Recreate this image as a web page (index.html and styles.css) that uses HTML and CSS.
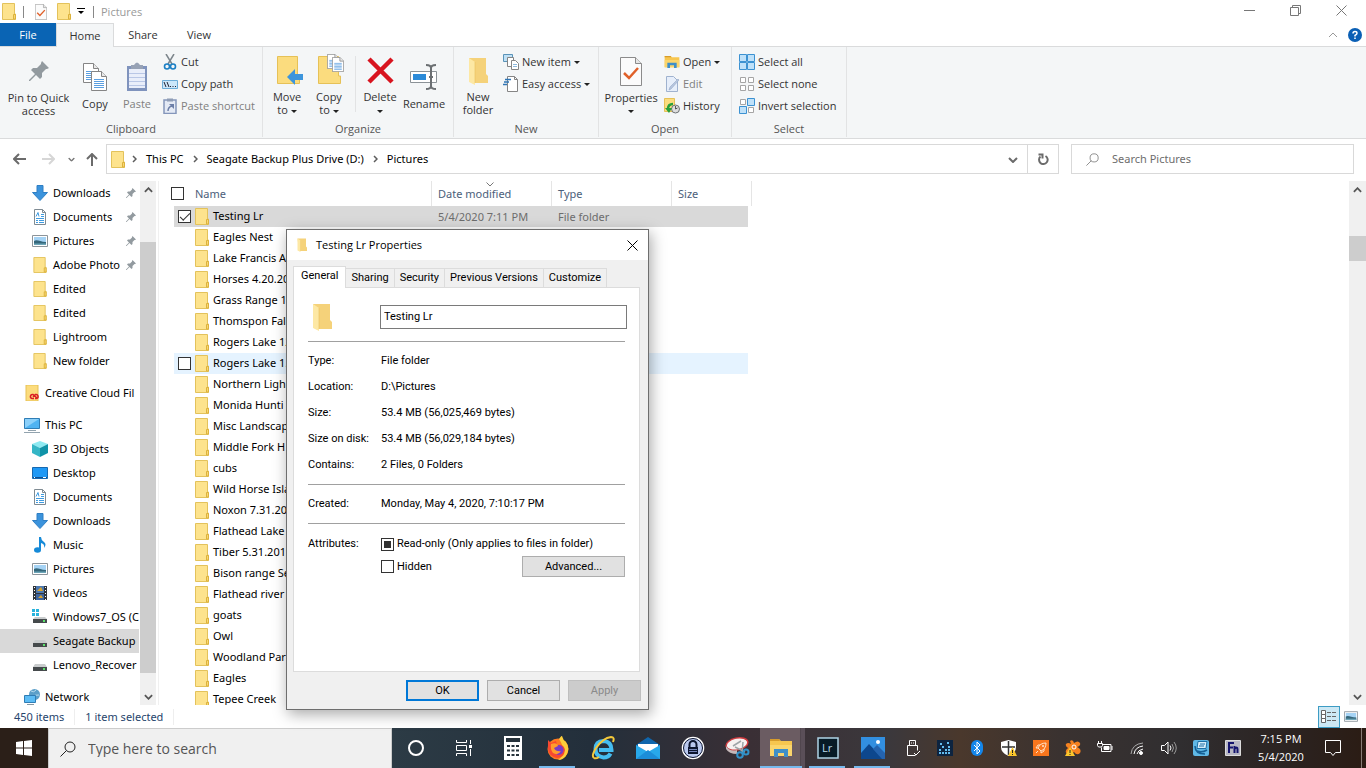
FILE: index.html
```html
<!DOCTYPE html>
<html lang="en">

<head>
    <meta charset="utf-8">
    <title>Pictures</title>
    <link rel="stylesheet" href="styles.css">
</head>

<body>
    <!-- icons used more than once -->
    <svg class="sprite" aria-hidden="true">
        <symbol id="folder" viewBox="0 0 14 17">
            <path d="M.5.5h12v10.500h1v5.500H.5z" fill="#fde38d" stroke="#e3c25b" />
            <path d="M11.500 16v-4.500h2V16z" fill="#f8d775" stroke="#dcb23c" />
        </symbol>
        <symbol id="folder-open" viewBox="0 0 20 28">
            <path d="M1 1h17v16l2 2v7H4z" fill="#f5d27a" />
            <path d="M1 1l6 4v23l-6-3z" fill="#fde8a4" />
            <path d="M7 5v21" stroke="#e9bf5b" stroke-width=".6" />
        </symbol>
        <symbol id="pin" viewBox="0 0 20 20">
            <path d="M13 0l7 7-2 1-1 0-4 4 0 4-2 2-4-4-6 6-1 0 0-1 6-6-4-4 2-2 4 0 4-4 0-1z" fill="#929a9f" />
        </symbol>
        <symbol id="down" viewBox="0 0 16 16">
            <path d="M5 .5h6v7h4.500L8 15.500.5 7.500H5z" fill="#3b93dc" stroke="#2f7fc4" />
        </symbol>
        <symbol id="doc" viewBox="0 0 16 16">
            <path d="M2.500.5h8l3 3v12h-11z" fill="#fff" stroke="#7f8b93" />
            <path d="M10.500.5v3h3" fill="none" stroke="#7f8b93" />
            <path d="M4 7.500l2-4 1 4M9 5.500h3M9 7.500h3M4 9.500h8M4 11.500h2M4 13.500h2M7 11.500h5M7 13.500h5" fill="none" stroke="#3f9be0" />
        </symbol>
        <symbol id="pic" viewBox="0 0 16 12">
            <path d="M.5.5h15v11H.5z" fill="#fff" stroke="#8c949a" />
            <path d="M2 2h12v8H2z" fill="#a5d3f5" />
            <path d="M2 6c3-2 6 1 12 1v3H2z" fill="#35677b" />
            <path d="M2 8.500h12V10H2z" fill="#6da6b8" />
        </symbol>
        <symbol id="drive" viewBox="0 0 16 16">
            <path d="M3 7h10l2 3H1z" fill="#c9cccd" />
            <path d="M1 10h14v4H1z" fill="#454a4c" />
            <path d="M11 12h2" stroke="#5be36b" stroke-width="2" />
        </symbol>
        <symbol id="page" viewBox="0 0 16 20">
            <path d="M.5.5h10l5 5v14H.5z" fill="#fff" stroke="#858585" />
            <path d="M10.500.5v5h5" fill="#e8e8e8" stroke="#858585" />
            <path d="M3 8.500h10M3 10.500h10M3 12.500h10M3 14.500h10M3 16.500h10" stroke="#5b9fe0" />
        </symbol>
        <symbol id="check-page" viewBox="0 0 22 29">
            <path d="M.5.5h15l6 6v22H.5z" fill="#fbfbfb" stroke="#8b8b8b" />
            <path d="M15.500.5v6h6" fill="#e6e6e6" stroke="#8b8b8b" />
            <path d="M4 16l5 5 9-10" fill="none" stroke="#e0612a" stroke-width="2.500" />
        </symbol>
        <symbol id="chev-up" viewBox="0 0 10 6">
            <path d="M1 5l4-4 4 4" fill="none" stroke="currentColor" stroke-width="2" />
        </symbol>
        <symbol id="chev-down" viewBox="0 0 10 6">
            <path d="M1 1l4 4 4-4" fill="none" stroke="currentColor" stroke-width="2" />
        </symbol>
        <symbol id="chev-right" viewBox="0 0 5 8">
            <path d="M1 1l3 3-3 3" fill="none" stroke="#5c5c5c" stroke-width="1.500" />
        </symbol>
        <symbol id="caret" viewBox="0 0 6 3">
            <path d="M0 0h6L3 3z" fill="#222" />
        </symbol>
        <symbol id="search" viewBox="0 0 16 16">
            <circle cx="10" cy="6" r="5" fill="none" stroke="currentColor" />
            <path d="M6.500 9.500L.5 15.500" stroke="currentColor" />
        </symbol>
        <symbol id="explorer" viewBox="0 0 24 20">
            <path d="M1 1h9l2 2h11v15H1z" fill="#f7c64f" />
            <path d="M1 1h9l1 2H1z" fill="#d79c2b" />
            <path d="M1 7h22v11H1z" fill="#fbd56c" />
            <path d="M5 19v-8h14v8h-4v-4H9v4z" fill="#3f8fc8" />
        </symbol>
    </svg>

    <div class="window">
        <header class="titlebar">
            <svg class="i-folder"><use href="#folder" /></svg>
            <span class="bar"></span>
            <button class="quick" aria-label="Properties"><svg width="12" height="16"><use href="#check-page" /></svg></button>
            <button class="quick" aria-label="New folder"><svg class="i-folder"><use href="#folder" /></svg></button>
            <button class="quick more" aria-label="Customize toolbar"><svg width="8" height="7" viewBox="0 0 8 7"><path d="M0 .5h8" stroke="#000" /><path d="M1 3h6L4 6z" /></svg></button>
            <span class="bar"></span>
            <span class="caption">Pictures</span>
            <div class="winbuttons">
                <button aria-label="Minimize"><svg width="11" height="11"><path d="M0 5.500h11" stroke="#777" /></svg></button>
                <button aria-label="Restore"><svg width="11" height="11" fill="none" stroke="#777"><path d="M.5 2.500h8v8h-8zM2.500 2.500v-2h8v8h-2" /></svg></button>
                <button aria-label="Close"><svg width="11" height="11"><path d="M.5.5l10 10M10.500.5l-10 10" stroke="#777" /></svg></button>
            </div>
        </header>

        <nav class="tabs">
            <button class="file">File</button>
            <button class="active">Home</button>
            <button>Share</button>
            <button>View</button>
            <span class="tabs-right">
                <svg class="collapse" width="10" height="6"><path d="M1 5l4-4 4 4" fill="none" stroke="#999" /></svg>
                <svg width="14" height="14"><circle cx="7" cy="7" r="7" fill="#0a5fb5" /><path d="M5 5.500q0-2 2-2t2 1.700q0 1-2 2.200v1M7 9.500v1.500" fill="none" stroke="#fff" stroke-width="1.500" /></svg>
            </span>
        </nav>

        <section class="ribbon">
            <div class="group">
                <div class="tools">
                    <button class="big pin-btn"><svg class="pic" viewBox="0 0 32 32"><use href="#pin" x="6" y="6" width="20" height="20" /></svg>Pin to Quick<br>access</button>
                    <button class="big"><svg class="pic" viewBox="0 0 32 32"><use href="#page" x="4" y="2" width="16" height="20" /><use href="#page" x="12" y="10" width="16" height="20" /></svg>Copy</button>
                    <button class="big dim"><svg class="pic" viewBox="0 0 32 32"><path d="M6 5h20v25H6z" fill="#7f93bd" /><path d="M8 8h16v19H8z" fill="#e9eefa" /><path d="M10 4h3q3-5 6 0h3v4H10z" fill="#97a2b5" /><path d="M8 12.500h16M8 16.500h16M8 20.500h16M8 24.500h16" stroke="#b9c7e6" /></svg>Paste</button>
                    <div class="stack">
                        <button><svg class="ico" viewBox="0 0 16 16"><path d="M4 0l6 10M12 0L6 10" stroke="#7d868c" stroke-width="1.500" /><circle cx="5" cy="12.500" r="2.500" fill="none" stroke="#1b7fc4" stroke-width="1.600" /><circle cx="11" cy="12.500" r="2.500" fill="none" stroke="#1b7fc4" stroke-width="1.600" /></svg>Cut</button>
                        <button><svg class="ico" viewBox="0 0 16 16"><path d="M.5 4.500h15v8H.5z" fill="#cbe7fa" stroke="#6dadd8" /><path d="M2 6l2 5M5 6l2 5M8 10.500h1M10.500 10.500h1M13 10.500h1" stroke="#223" /></svg>Copy path</button>
                        <button class="dim"><svg class="ico" viewBox="0 0 16 16"><path d="M2 2h12v13.500H2z" fill="#e4eaf5" stroke="#8496bb" stroke-width="1.500" /><path d="M5 .5h6v3H5z" fill="#8f9db5" /><path d="M6 13q0-4 4-5" fill="none" stroke="#6c7fa8" stroke-width="1.500" /><path d="M7 6h5v5z" fill="#6c7fa8" /></svg>Paste shortcut</button>
                    </div>
                </div>
                <h2>Clipboard</h2>
            </div>
            <div class="group organize">
                <div class="tools">
                    <button class="big"><svg class="pic" viewBox="0 0 32 32"><path d="M6.500 2.500h20V22h2v7.500h-22z" fill="#fbdc7e" stroke="#e6c157" /><path d="M32 20v6h-8v5l-8-8 8-8v5z" fill="#3d95dc" /></svg>Move<br>to <svg class="caret"><use href="#caret" /></svg></button>
                    <button class="big"><svg class="pic" viewBox="0 0 32 32"><path d="M5.500 2.500h20V22h2v7.500h-22z" fill="#fbdc7e" stroke="#e6c157" /><use href="#page" x="14" y="0" width="12" height="15" /><use href="#page" x="19" y="3" width="12" height="15" /></svg>Copy<br>to <svg class="caret"><use href="#caret" /></svg></button>
                    <span class="split"></span>
                    <button class="big"><svg class="pic" viewBox="0 0 32 32"><path d="M5 5l23 23M28 5L5 28" stroke="#d8141f" stroke-width="4.500" /></svg>Delete<br><svg class="caret"><use href="#caret" /></svg></button>
                    <button class="big wide"><svg class="pic" viewBox="0 0 32 32"><path d="M2.500 10.500h26v11h-26z" fill="#fff" stroke="#8b9297" /><path d="M5 13h13v6H5z" fill="#2b8ad8" /><path d="M18 4q5 0 5 3v18q0 3-5 3M28 4q-5 0-5 3v18q0 3 5 3M21 16h4" fill="none" stroke="#6b6f72" stroke-width="2" /></svg>Rename</button>
                </div>
                <h2>Organize</h2>
            </div>
            <div class="group new">
                <div class="tools">
                    <button class="big"><svg class="pic" viewBox="0 0 32 32"><use href="#folder-open" x="6" y="3" width="20" height="28" /></svg>New<br>folder</button>
                    <div class="stack">
                        <button><svg class="ico" viewBox="0 0 16 16"><path d="M.5.5h9v7h-9z" fill="#bfe0f5" stroke="#5a93b8" /><path d="M4.500 3.500h6v9h-6z" fill="#fff" stroke="#858585" /><path d="M8.500 6.500h4l3 3v6h-7z" fill="#fff" stroke="#858585" /><path d="M10 10.500h4M10 12.500h4" stroke="#8db9dd" /></svg>New item <svg class="caret"><use href="#caret" /></svg></button>
                        <button><svg class="ico" viewBox="0 0 16 16"><path d="M4.500.5h7l3 3v12h-10z" fill="#fff" stroke="#858585" /><path d="M11.500.5v3h3" fill="none" stroke="#858585" /><path d="M2 3.500h6M1 6h5M0 8.500h4" stroke="#2f75b5" stroke-width="1.500" /></svg>Easy access <svg class="caret"><use href="#caret" /></svg></button>
                    </div>
                </div>
                <h2>New</h2>
            </div>
            <div class="group open">
                <div class="tools">
                    <button class="big props"><svg class="pic" viewBox="0 0 32 32"><use href="#check-page" x="5" y="2" width="22" height="29" /></svg>Properties<br><svg class="caret"><use href="#caret" /></svg></button>
                    <div class="stack">
                        <button><svg class="ico" viewBox="0 0 24 20"><use href="#explorer" width="24" height="20" /></svg>Open <svg class="caret"><use href="#caret" /></svg></button>
                        <button class="dim"><svg class="ico" viewBox="0 0 16 16"><path d="M2.500.5h7l4 4v11h-11z" fill="#e6eefa" stroke="#9fb2cf" /><path d="M15 4l-8 9-2 1 1-3 8-8z" fill="#b7c6de" stroke="#93a7c8" stroke-width=".6" /></svg>Edit</button>
                        <button><svg class="ico" viewBox="0 0 16 16"><path d="M.5.5h10v13H.5z" fill="#fbdc7e" stroke="#e6c157" /><circle cx="11.500" cy="11" r="4" fill="#ddd" stroke="#6d7275" /><path d="M11.500 8v3l2-1" fill="none" stroke="#555" /><path d="M9 6q-5 0-5 5" fill="none" stroke="#29a03a" stroke-width="2.500" /><path d="M1 10h7l-3 5z" fill="#29a03a" /></svg>History</button>
                    </div>
                </div>
                <h2>Open</h2>
            </div>
            <div class="group select">
                <div class="tools">
                    <div class="stack">
                        <button><svg class="ico" viewBox="0 0 16 16" fill="#bfe1f9" stroke="#3c92d2"><path d="M.5.5h7v7h-7zM8.500.5h7v7h-7zM.5 8.500h7v7h-7zM8.500 8.500h7v7h-7z" /></svg>Select all</button>
                        <button><svg class="ico" viewBox="0 0 16 16" fill="#fff" stroke="#a5a5a5"><path d="M1.500 1.500h5v5h-5zM9.500 1.500h5v5h-5zM1.500 9.500h5v5h-5zM9.500 9.500h5v5h-5z" /></svg>Select none</button>
                        <button><svg class="ico" viewBox="0 0 16 16"><path d="M1.500 1.500h5v5h-5zM9.500 9.500h5v5h-5z" fill="#fff" stroke="#a5a5a5" /><path d="M8.500.5h7v7h-7zM.5 8.500h7v7h-7z" fill="#bfe1f9" stroke="#3c92d2" /></svg>Invert selection</button>
                    </div>
                </div>
                <h2>Select</h2>
            </div>
        </section>

        <div class="navbar">
            <div class="arrows">
                <button aria-label="Back"><svg width="13" height="12" fill="none" stroke="#6b6b6b" stroke-width="2"><path d="M1 6h12M6 1L1 6l5 5" /></svg></button>
                <button aria-label="Forward"><svg width="13" height="12" fill="none" stroke="#d6d6d6" stroke-width="2"><path d="M0 6h12M7 1l5 5-5 5" /></svg></button>
                <button class="recent" aria-label="Recent locations"><svg width="7" height="5" viewBox="0 0 10 6"><use href="#chev-down" /></svg></button>
                <button class="up" aria-label="Up"><svg width="12" height="13" fill="none" stroke="#6b6b6b" stroke-width="2"><path d="M6 1v12M1 6l5-5 5 5" /></svg></button>
            </div>
            <div class="address">
                <svg class="i-folder"><use href="#folder" /></svg>
                <svg class="sep"><use href="#chev-right" /></svg><a href="#">This PC</a>
                <svg class="sep"><use href="#chev-right" /></svg><a href="#">Seagate Backup Plus Drive (D:)</a>
                <svg class="sep"><use href="#chev-right" /></svg><a href="#">Pictures</a>
                <button class="history" aria-label="Previous locations"><svg width="10" height="6"><use href="#chev-down" /></svg></button>
                <button class="refresh" aria-label="Refresh"><svg width="12" height="12" fill="none" stroke="#6b6b6b" stroke-width="2"><path d="M8.500 3A4.300 4.300 0 1 1 3.500 3.500M1.500 1.500h4v4" /></svg></button>
            </div>
            <label class="search"><svg width="13" height="13" viewBox="0 0 16 16"><use href="#search" /></svg><input type="text" placeholder="Search Pictures" aria-label="Search Pictures"></label>
        </div>

        <main class="content">
            <aside class="sidebar">
                <ul class="tree">
                    <li><svg class="ico"><use href="#down" /></svg><span>Downloads</span><svg class="pinned"><use href="#pin" /></svg></li>
                    <li><svg class="ico"><use href="#doc" /></svg><span>Documents</span><svg class="pinned"><use href="#pin" /></svg></li>
                    <li><svg class="ico"><use href="#pic" /></svg><span>Pictures</span><svg class="pinned"><use href="#pin" /></svg></li>
                    <li><svg class="ico"><use href="#folder" /></svg><span>Adobe Photo</span><svg class="pinned"><use href="#pin" /></svg></li>
                    <li><svg class="ico"><use href="#folder" /></svg><span>Edited</span></li>
                    <li><svg class="ico"><use href="#folder" /></svg><span>Edited</span></li>
                    <li><svg class="ico"><use href="#folder" /></svg><span>Lightroom</span></li>
                    <li><svg class="ico"><use href="#folder" /></svg><span>New folder</span></li>
                    <li class="root"><svg class="ico" viewBox="0 0 16 16"><path d="M2 0h12v16H2z" fill="#fcdc7d" stroke="#e6c157" /><path d="M10 13.500H8a2 2 0 1 1 1-4l4 3.500M11 13.500h1.500a2 2 0 1 0-1-4L9 12" fill="none" stroke="#da1f26" stroke-width="1.500" /></svg><span>Creative Cloud Fil</span></li>
                    <li class="root"><svg class="ico" viewBox="0 0 16 16"><path d="M.5 1.500h15v10H.5z" fill="#4fb3f2" stroke="#2f7db5" /><path d="M1 2h14L1 11z" fill="#8bd0fa" /><path d="M4 13.500h8M0 15.500h16" stroke="#92a3ae" /></svg><span>This PC</span></li>
                    <li><svg class="ico" viewBox="0 0 16 16"><path d="M0 3l8-3 8 3-8 4z" fill="#8eeaf2" /><path d="M0 3l8 4v9l-8-4z" fill="#35b6c6" /><path d="M16 3L8 7v9l8-4z" fill="#0f93a8" /></svg><span>3D Objects</span></li>
                    <li><svg class="ico" viewBox="0 0 16 16"><path d="M.5 2.500h15v11H.5z" fill="#1e98f5" stroke="#1668b0" /><path d="M1 12.500h14" stroke="#0d4f92" /><path d="M2 12.500h1M11 12.500h3" stroke="#fff" /></svg><span>Desktop</span></li>
                    <li><svg class="ico"><use href="#doc" /></svg><span>Documents</span></li>
                    <li><svg class="ico"><use href="#down" /></svg><span>Downloads</span></li>
                    <li><svg class="ico" viewBox="0 0 16 16"><ellipse cx="5.500" cy="13" rx="3.500" ry="2.700" fill="#168ad8" /><path d="M7 0h2q0 3 3 5t0 6q1-4-3-5v7H7z" fill="#168ad8" /></svg><span>Music</span></li>
                    <li><svg class="ico"><use href="#pic" /></svg><span>Pictures</span></li>
                    <li><svg class="ico" viewBox="0 0 16 16"><path d="M1 1h14v14H1z" fill="#2f3338" /><path d="M4 1h8v7H4z" fill="#4c78b0" /><path d="M4 9h8v6H4z" fill="#3c639c" /><path d="M5 6l4-4 2 4zM6 13l3-3 2 3z" fill="#d9a32c" /><path d="M2.500 2v13M13.500 2v13" stroke="#fff" stroke-dasharray="1 2" /></svg><span>Videos</span></li>
                    <li><svg class="ico" viewBox="0 0 16 16"><path d="M0 0h3v3H0zM4 0h3v3H4zM0 4h3v3H0zM4 4h3v3H4z" fill="#29b3dc" /><path d="M3 8h10l2 2H1z" fill="#c9cccd" /><path d="M1 10h14v4H1z" fill="#454a4c" /><path d="M11 12h2" stroke="#5be36b" stroke-width="2" /></svg><span>Windows7_OS (C</span></li>
                    <li class="current"><svg class="ico"><use href="#drive" /></svg><span>Seagate Backup</span></li>
                    <li><svg class="ico"><use href="#drive" /></svg><span>Lenovo_Recover</span></li>
                    <li class="root"><svg class="ico" viewBox="0 0 16 16"><circle cx="10.500" cy="5.500" r="5.500" fill="#5b9fc9" /><path d="M7 2q3 2 5-1M8 9q3-4 7-3" stroke="#b9dcef" fill="none" /><path d="M.5 6.500h11v7H.5z" fill="#5cbcf5" stroke="#2f7db5" /><path d="M3 15.500h7" stroke="#8597a3" /></svg><span>Network</span></li>
                </ul>
                <div class="scrollbar">
                    <svg class="chev"><use href="#chev-up" /></svg>
                    <span class="thumb"></span>
                    <svg class="chev"><use href="#chev-down" /></svg>
                </div>
            </aside>

            <div class="files">
                <table>
                    <colgroup>
                        <col class="c-check">
                        <col class="c-name">
                        <col class="c-data">
                        <col class="c-data">
                        <col class="c-size">
                    </colgroup>
                    <thead>
                        <tr>
                            <th><input type="checkbox" aria-label="Select all"></th>
                            <th>Name</th>
                            <th class="sorted">Date modified<svg width="8" height="5"><path d="M.5.5L4 4 7.500.5" fill="none" stroke="#777" /></svg></th>
                            <th>Type</th>
                            <th>Size</th>
                        </tr>
                    </thead>
                    <tbody>
                        <tr class="selected"><td><input type="checkbox" checked aria-label="Testing Lr"></td><td><svg class="i-folder"><use href="#folder" /></svg>Testing Lr</td><td>5/4/2020 7:11 PM</td><td>File folder</td><td></td></tr>
                        <tr><td></td><td><svg class="i-folder"><use href="#folder" /></svg>Eagles Nest</td><td></td><td></td><td></td></tr>
                        <tr><td></td><td><svg class="i-folder"><use href="#folder" /></svg>Lake Francis A</td><td></td><td></td><td></td></tr>
                        <tr><td></td><td><svg class="i-folder"><use href="#folder" /></svg>Horses 4.20.20</td><td></td><td></td><td></td></tr>
                        <tr><td></td><td><svg class="i-folder"><use href="#folder" /></svg>Grass Range 1</td><td></td><td></td><td></td></tr>
                        <tr><td></td><td><svg class="i-folder"><use href="#folder" /></svg>Thomspon Fal</td><td></td><td></td><td></td></tr>
                        <tr><td></td><td><svg class="i-folder"><use href="#folder" /></svg>Rogers Lake 12</td><td></td><td></td><td></td></tr>
                        <tr class="hover"><td><input type="checkbox" aria-label="Rogers Lake 1"></td><td><svg class="i-folder"><use href="#folder" /></svg>Rogers Lake 1.</td><td></td><td></td><td></td></tr>
                        <tr><td></td><td><svg class="i-folder"><use href="#folder" /></svg>Northern Ligh</td><td></td><td></td><td></td></tr>
                        <tr><td></td><td><svg class="i-folder"><use href="#folder" /></svg>Monida Hunti</td><td></td><td></td><td></td></tr>
                        <tr><td></td><td><svg class="i-folder"><use href="#folder" /></svg>Misc Landscap</td><td></td><td></td><td></td></tr>
                        <tr><td></td><td><svg class="i-folder"><use href="#folder" /></svg>Middle Fork H</td><td></td><td></td><td></td></tr>
                        <tr><td></td><td><svg class="i-folder"><use href="#folder" /></svg>cubs</td><td></td><td></td><td></td></tr>
                        <tr><td></td><td><svg class="i-folder"><use href="#folder" /></svg>Wild Horse Isla</td><td></td><td></td><td></td></tr>
                        <tr><td></td><td><svg class="i-folder"><use href="#folder" /></svg>Noxon 7.31.20</td><td></td><td></td><td></td></tr>
                        <tr><td></td><td><svg class="i-folder"><use href="#folder" /></svg>Flathead Lake</td><td></td><td></td><td></td></tr>
                        <tr><td></td><td><svg class="i-folder"><use href="#folder" /></svg>Tiber 5.31.2019</td><td></td><td></td><td></td></tr>
                        <tr><td></td><td><svg class="i-folder"><use href="#folder" /></svg>Bison range Se</td><td></td><td></td><td></td></tr>
                        <tr><td></td><td><svg class="i-folder"><use href="#folder" /></svg>Flathead river</td><td></td><td></td><td></td></tr>
                        <tr><td></td><td><svg class="i-folder"><use href="#folder" /></svg>goats</td><td></td><td></td><td></td></tr>
                        <tr><td></td><td><svg class="i-folder"><use href="#folder" /></svg>Owl</td><td></td><td></td><td></td></tr>
                        <tr><td></td><td><svg class="i-folder"><use href="#folder" /></svg>Woodland Par</td><td></td><td></td><td></td></tr>
                        <tr><td></td><td><svg class="i-folder"><use href="#folder" /></svg>Eagles</td><td></td><td></td><td></td></tr>
                        <tr><td></td><td><svg class="i-folder"><use href="#folder" /></svg>Tepee Creek</td><td></td><td></td><td></td></tr>
                    </tbody>
                </table>
            </div>
            <div class="scrollbar main-scroll">
                <svg class="chev"><use href="#chev-up" /></svg>
                <span class="thumb"></span>
                <svg class="chev"><use href="#chev-down" /></svg>
            </div>
        </main>

        <footer class="status">
            <span>450 items</span>
            <span>1 item selected</span>
            <div class="views">
                <button class="on" aria-label="Details"><svg width="16" height="14" stroke="#666" fill="#fff"><path d="M.5.5h4v4h-4zM.5 4.500h4v4h-4zM.5 8.500h4v4h-4z" /><path d="M6 2.500h4M11 2.500h4M6 6.500h4M11 6.500h4M6 10.500h4M11 10.500h4" /></svg></button>
                <button aria-label="Large icons"><svg width="14" height="11"><use href="#pic" /></svg></button>
            </div>
        </footer>
    </div>

    <div class="dialog" role="dialog" aria-label="Testing Lr Properties">
        <div class="dialog-title">
            <svg width="10" height="14"><use href="#folder-open" /></svg>
            <span>Testing Lr Properties</span>
            <button aria-label="Close"><svg width="11" height="11"><path d="M.5.5l10 10M10.500.5l-10 10" stroke="#000" /></svg></button>
        </div>
        <div class="dialog-tabs">
            <button class="active">General</button>
            <button>Sharing</button>
            <button>Security</button>
            <button>Previous Versions</button>
            <button>Customize</button>
        </div>
        <div class="panel">
            <div class="name-row">
                <svg width="20" height="28"><use href="#folder-open" /></svg>
                <input type="text" value="Testing Lr" aria-label="Name">
            </div>
            <hr>
            <dl>
                <dt>Type:</dt><dd>File folder</dd>
                <dt>Location:</dt><dd>D:\Pictures</dd>
                <dt>Size:</dt><dd>53.4 MB (56,025,469 bytes)</dd>
                <dt>Size on disk:</dt><dd>53.4 MB (56,029,184 bytes)</dd>
                <dt>Contains:</dt><dd>2 Files, 0 Folders</dd>
            </dl>
            <hr>
            <dl>
                <dt>Created:</dt><dd>Monday, May 4, 2020, 7:10:17 PM</dd>
            </dl>
            <hr>
            <div class="attributes">
                <span>Attributes:</span>
                <div class="boxes">
                    <label><input type="checkbox" class="mixed">Read-only (Only applies to files in folder)</label>
                    <div class="hidden-row">
                        <label><input type="checkbox">Hidden</label>
                        <button class="btn advanced">Advanced...</button>
                    </div>
                </div>
            </div>
        </div>
        <div class="dialog-buttons">
            <button class="btn default">OK</button>
            <button class="btn">Cancel</button>
            <button class="btn" disabled>Apply</button>
        </div>
    </div>

    <footer class="taskbar">
        <button class="start" aria-label="Start"><svg width="16" height="16" fill="#fff"><path d="M0 2l7-1v6.500H0zM8 1l8-1v7.500H8zM0 8.500h7V15l-7-1zM8 8.500h8V16l-8-1z" /></svg></button>
        <label class="task-search"><svg width="16" height="16"><use href="#search" /></svg><input type="text" placeholder="Type here to search" aria-label="Type here to search"></label>
        <div class="system">
            <button aria-label="Cortana"><svg width="18" height="18"><circle cx="9" cy="9" r="7" fill="none" stroke="#fff" stroke-width="2" /></svg></button>
            <button aria-label="Task view"><svg width="18" height="16" fill="none" stroke="#fff"><path d="M1.500 0v2.500h10V0M1.500 5.500h10v5h-10zM1.500 16v-2.500h10V16M15.500 0v4M15.500 9v7" /><path d="M14 5h3v3h-3z" fill="#fff" stroke="none" /></svg></button>
        </div>
        <div class="apps">
            <button aria-label="Calculator"><svg width="18" height="24"><path d="M0 0h18v24H0z" fill="#fff" /><path d="M2 2h14v4H2z" fill="#26323b" /><path d="M3 10h12M3 14.500h12M3 19h12" stroke="#26323b" stroke-width="2" stroke-dasharray="3 1.500" /></svg></button>
            <button class="running" aria-label="Firefox"><svg width="24" height="24"><circle cx="12" cy="13" r="10.500" fill="#ff7a21" /><path d="M13 3q3-4 3-3 1 4 4 6 4 6 1 12-3 6-9 6 10-7 1-21z" fill="#ffce3a" /><path d="M2 4l3 3 5-2 1 4q7-1 8 5-1 8-8 8-9-2-9-10z" fill="#f8482f" /><circle cx="12.500" cy="14" r="5" fill="#7a3cc4" /><path d="M5 8q6-2 7 2l-4 2q2 4 7 3-3 5-8 2-3-4-2-9z" fill="#ff9d2c" /></svg></button>
            <button aria-label="Internet Explorer"><svg width="24" height="24" fill="none"><path d="M19.500 17.500q-2 4-7 4-8-1-8-8.500t8-8q8 .5 8 9H8" stroke="#45bdf0" stroke-width="4" /><path d="M3 22q-3-2 2-10Q12 2 20 1q4 0 2 5" stroke="#f5c93a" stroke-width="2" /><path d="M3 22q2 1 5-1" stroke="#f5c93a" stroke-width="2" /></svg></button>
            <button aria-label="Mail"><svg width="24" height="22"><path d="M0 8l12-8 12 8v14H0z" fill="#0f66ad" /><path d="M2 7h20v8H2z" fill="#fff" /><path d="M0 8l12 7 12-7v14H0z" fill="#28a8ea" /><path d="M0 22l12-9 12 9z" fill="#1c8dd8" /></svg></button>
            <button aria-label="Password manager"><svg width="24" height="24"><circle cx="12" cy="12" r="10.500" fill="#b8c7ee" stroke="#fff" stroke-width="1.500" /><circle cx="12" cy="12" r="9.500" fill="none" stroke="#0d1630" /><path d="M8.500 11V8.500a3.500 3.500 0 0 1 7 0V11" fill="none" stroke="#0d1630" stroke-width="2" /><path d="M7 11h10v7H7z" fill="#0d1630" /><path d="M8 13.500h8M8 15.500h8" stroke="#7585b8" /></svg></button>
            <button aria-label="Snipping Tool"><svg width="26" height="24"><ellipse cx="12" cy="8" rx="11" ry="6" fill="#f6f1f1" stroke="#d03c40" stroke-width="1.500" transform="rotate(-12 12 8)" /><path d="M1 10q4 6 11 4v4Q4 18 1 13z" fill="#c5b7b8" /><path d="M8 10l8-5M18 6l-1 11M10 11l10 5" stroke="#9ea4a8" stroke-width="1.500" /><circle cx="15" cy="19" r="2.800" fill="none" stroke="#3192ca" stroke-width="2" /><circle cx="21" cy="16" r="2.500" fill="none" stroke="#3192ca" stroke-width="2" /></svg></button>
            <button class="running focused" aria-label="File Explorer"><svg width="24" height="20"><use href="#explorer" /></svg></button>
            <button class="running" aria-label="Lightroom"><svg width="22" height="22"><path d="M1 1h20v20H1z" fill="#071b26" stroke="#aed3e5" stroke-width="1.500" /><text x="5" y="15" class="lr">Lr</text></svg></button>
            <button class="running" aria-label="Photos"><svg width="24" height="22"><path d="M0 0h24v22H0z" fill="#328fe0" /><path d="M0 16l8-9 14 15H0z" fill="#0d478d" /><path d="M12 12l4-4 8 8v6h-3z" fill="#2463ae" /><circle cx="17" cy="5" r="2" fill="#fff" /></svg></button>
        </div>
        <div class="tray">
            <svg viewBox="0 0 16 16" fill="none" stroke="#fff"><path d="M4.500 5.500v-5h6v5M10.500 15.500h-8v-10h10v5M6 3h1M8 3h1M9 13l2 2 4-4" /></svg>
            <svg viewBox="0 0 16 16"><path d="M0 0h16v16H0z" fill="#0d2440" /><path d="M2 13h12M2 10h3M8 10h6M5 7h2M11 7h2M3 4h2M10 3h2" stroke="#63bdf0" stroke-width="2" stroke-dasharray="2 1" /></svg>
            <svg viewBox="0 0 16 16"><rect x="2" width="12" height="16" rx="6" fill="#1486ea" /><path d="M5 5l6 6-3 3V2l3 3-6 6" fill="none" stroke="#fff" /></svg>
            <svg viewBox="0 0 16 16"><path d="M7.500 0L15 2v5q0 6-7.500 9Q0 13 0 7V2z" fill="#fff" /><path d="M7.500 1v14M1 7h13" stroke="#333" stroke-width="1.500" /><path d="M11.500 7l4.500 9H7z" fill="#fbc62c" /><path d="M11.500 10v3M11.500 14v1" stroke="#222" /></svg>
            <svg viewBox="0 0 16 16"><path d="M0 0h16v16H0z" fill="#f9761d" /><path d="M5 8q2-5 8-5 0 6-5 8zM5 8H3l2-3h2M8 11v2l3-2V9M3 13l2-2" fill="none" stroke="#ffe2c9" /><circle cx="10" cy="6" r="1" fill="#ffe2c9" /></svg>
            <svg viewBox="0 0 16 16"><path d="M5 1q3-2 4 2 4-3 6 0 1 3-3 4 5 2 3 6-3 3-6-1-4 4-7 2-3-3 1-6Q0 6 1 4q2-2 5 0z" fill="#f58220" /><circle cx="9" cy="7" r="2" fill="none" stroke="#fff" /><path d="M5 7l5 9H0z" fill="#fbc62c" /><path d="M5 10v3M5 14v1" stroke="#222" /></svg>
            <svg viewBox="0 0 16 16" fill="none" stroke="#fff"><path d="M6 4.500h8v7H4.500v-4M15 6v4M1.500 1v3M4.500 1v3M.5 3.500h5v2l-1 1.500h-3l-1-1.500z" /><path d="M7 6.500h5v3H7z" fill="#fff" /></svg>
            <svg viewBox="0 0 16 16" fill="none" stroke="#fff"><path d="M2 14Q3 4 14 3" stroke="#aaa" /><path d="M5 14q1-7 9-8M8 14q1-4 6-5" /><circle cx="12" cy="13" r="1.500" fill="#fff" /></svg>
            <svg viewBox="0 0 16 16" fill="none" stroke="#fff"><path d="M.5 5.500h3L7 2v12l-3.500-3.500h-3zM9 5.500q2 2.500 0 5" /><path d="M11 4q3 4 0 8M13 2q4.500 6 0 12" stroke="#999" /></svg>
            <svg viewBox="0 0 16 16"><rect width="16" height="16" rx="2" fill="#5fb8e6" /><path d="M5 1.500h9l-1 7H4z" fill="#d5eefb" stroke="#1c6fa6" /><path d="M4 11q5 2 10-1M2 6q0 8 10 8" fill="none" stroke="#155f93" stroke-width="1.500" /><path d="M7 4h5M6 6h5" stroke="#1c6fa6" /></svg>
            <svg viewBox="0 0 16 16"><path d="M.5.5h15v15H.5z" fill="#b7b7c4" stroke="#ddd" /><path d="M4 13V3h5M4 7.500h4M9.500 13V6M9.500 9q3-3 3 0v4" fill="none" stroke="#14146e" stroke-width="2" /></svg>
        </div>
        <div class="clock">7:15 PM<br>5/4/2020</div>
        <button class="action" aria-label="Notifications"><svg width="18" height="17" fill="none" stroke="#fff"><path d="M1.500.5h15v12h-5L9 15.500 6.500 12.500h-5z" /></svg></button>
        <span class="show-desktop"></span>
    </footer>
</body>

</html>
```
FILE: styles.css
```css
* {
    box-sizing: border-box;
}

body {
    margin: 0;
    height: 100vh;
    display: flex;
    flex-direction: column;
    overflow: hidden;
    position: relative;
    background: #fff;
    color: #000;
    font-family: "Open Sans", "Noto Sans", sans-serif;
    font-size: 11px;
    line-height: 16px;
}

button,
input {
    font: inherit;
    color: inherit;
    margin: 0;
}

button {
    padding: 0;
    border: 0;
    background: none;
    white-space: nowrap;
}

svg {
    flex: none;
}

.sprite {
    position: absolute;
    width: 0;
    height: 0;
}

.ico {
    width: 16px;
    height: 16px;
}

.i-folder {
    width: 14px;
    height: 17px;
}

.caret {
    width: 6px;
    height: 3px;
    vertical-align: middle;
}

.chev {
    width: 9px;
    height: 6px;
    color: #555;
}

input[type="checkbox"] {
    appearance: none;
    width: 13px;
    height: 13px;
    border: 1px solid #333;
    background: #fff;
    display: block;
    flex: none;
}

.window {
    flex: 1;
    min-height: 0;
    display: flex;
    flex-direction: column;
}

/* Title bar */
.titlebar {
    height: 23px;
    display: flex;
    align-items: center;
    padding-left: 2px;
    color: #999;
}

.titlebar .bar {
    width: 1px;
    height: 12px;
    margin: 0 7px;
    background: #888;
}

.quick {
    display: flex;
    margin-left: 4px;
    margin-right: 6px;
}

.quick.more {
    margin: 0 1px 0 0;
}

.winbuttons {
    margin-left: auto;
    display: flex;
    margin-right: 2px;
}

.winbuttons button {
    width: 46px;
    height: 22px;
}

/* Ribbon tabs */
.tabs {
    height: 24px;
    display: flex;
    border-bottom: 1px solid #dadbdc;
    color: #333;
}

.tabs button {
    width: 56px;
    height: 24px;
}

.tabs .file {
    background: #0a64b4;
    color: #fff;
    height: 23px;
}

.tabs .active {
    width: 58px;
    background: #f4f6f7;
    border: 1px solid #dadbdc;
    border-bottom: 0;
    margin-right: 1px;
}

.tabs-right {
    margin-left: auto;
    display: flex;
    align-items: center;
    gap: 10px;
    padding-right: 4px;
}

/* Ribbon */
.ribbon {
    height: 92px;
    display: flex;
    background: #f4f6f7;
    border-bottom: 1px solid #dadbdc;
    color: #333;
}

.group {
    display: flex;
    flex-direction: column;
    justify-content: space-between;
    padding: 4px 3px 0;
    margin-bottom: 1px;
    border-right: 1px solid #e2e3e4;
}

.group h2 {
    margin: 0;
    font-size: 11px;
    font-weight: normal;
    text-align: center;
    color: #555;
}

.tools {
    display: flex;
}

.big {
    width: 42px;
    line-height: 13px;
    padding-top: 3px;
}

.big .pic {
    display: block;
    width: 32px;
    height: 32px;
    margin: 0 auto 4px;
}

.big.wide {
    width: 46px;
}

.pin-btn {
    width: 71px;
}

.props {
    width: 58px;
}

.dim {
    color: #808080;
}

.stack {
    display: flex;
    flex-direction: column;
    padding-left: 4px;
}

.stack button {
    display: flex;
    align-items: center;
    gap: 3px;
    height: 22px;
}

.group:first-child {
    width: 263px;
}

.organize {
    width: 191px;
}

.new {
    width: 145px;
}

.open {
    width: 133px;
}

.select {
    width: 115px;
}

.split {
    width: 1px;
    height: 56px;
    margin: 5px 3px 0 5px;
    background: #e2e3e4;
}

/* Navigation bar */
.navbar {
    display: flex;
    height: 42px;
    padding: 5px 12px 7px 0;
}

.navbar,
.content,
.status {
    font-family: "Noto Sans", "Open Sans", sans-serif;
}

.arrows {
    width: 106px;
    display: flex;
    align-items: center;
    gap: 16px;
    padding-left: 13px;
}

.arrows button {
    display: flex;
}

.arrows .recent {
    color: #777;
    margin-right: -5px;
    margin-left: -3px;
}

.address {
    flex: 1;
    display: flex;
    align-items: center;
    border: 1px solid #d9d9d9;
    padding-left: 4px;
}

.address a {
    color: #000;
    text-decoration: none;
}

.sep {
    width: 5px;
    height: 8px;
    margin: 0 9px;
}

.i-folder + .sep {
    margin-left: 7px;
}

.history {
    margin-left: auto;
    padding-right: 9px;
    color: #6b6b6b;
}

.refresh {
    width: 31px;
    height: 100%;
    border-left: 1px solid #d9d9d9;
    display: flex;
    align-items: center;
    justify-content: center;
}

.search {
    width: 283px;
    margin-left: 12px;
    border: 1px solid #d9d9d9;
    display: flex;
    align-items: center;
    gap: 13px;
    padding-left: 14px;
    color: #777;
}

.search input {
    flex: 1;
    min-width: 0;
    border: 0;
    padding: 0;
    outline: none;
}

::placeholder {
    color: #6d6d6d;
    opacity: 1;
}

/* Content */
.content {
    flex: 1;
    min-height: 0;
    display: flex;
}

.sidebar {
    width: 159px;
    display: flex;
    border-right: 1px solid #f0f0f0;
}

.tree {
    width: 139px;
    margin: 0 1px 0 0;
    padding: 0;
    list-style: none;
    overflow: hidden;
}

.tree li {
    display: flex;
    align-items: center;
    gap: 5px;
    height: 24px;
    padding-left: 32px;
    white-space: nowrap;
}

.tree li.root {
    margin-top: 8px;
    padding-left: 24px;
}

.tree .current {
    background: #d9d9d9;
}

.tree span {
    flex: 1;
}

.pinned {
    width: 10px;
    height: 10px;
    margin-right: 3px;
}

.scrollbar {
    width: 16px;
    background: #f0f0f0;
    display: flex;
    flex-direction: column;
    align-items: center;
    justify-content: space-between;
    padding: 6px 0 5px;
}

.scrollbar .thumb {
    width: 100%;
    height: 84%;
    margin-top: 28px;
    background: #cdcdcd;
}

.main-scroll {
    width: 17px;
}

.main-scroll .thumb {
    height: 25px;
    margin: 43px 0 auto;
}

.files {
    flex: 1;
    overflow: hidden;
    padding-left: 15px;
}

.files table {
    width: 578px;
    table-layout: fixed;
    border-spacing: 0;
}

.c-check {
    width: 21px;
}

.c-name {
    width: 237px;
}

.c-data {
    width: 120px;
}

.c-size {
    width: 80px;
}

.files th {
    height: 25px;
    padding: 0 6px;
    text-align: left;
    font-weight: normal;
    color: #4c607a;
    border-right: 1px solid #e5e5e5;
    position: relative;
}

.files th:first-child {
    padding: 0;
    border: 0;
}

.files th:first-child input {
    margin-left: -3px;
}

.files th:nth-child(2) {
    padding-left: 0;
}

.sorted svg {
    position: absolute;
    top: 1px;
    left: 50%;
    margin-left: -6px;
}

.files td {
    height: 21px;
    padding: 0 6px;
    white-space: nowrap;
    color: #6d6d6d;
}

.files td:first-child {
    padding: 0 0 0 4px;
}

.files td:nth-child(2) {
    padding: 0;
    color: #000;
}

.files td:last-child {
    border-right: 4px solid #fff;
}

.files .i-folder {
    vertical-align: middle;
    margin-right: 4px;
}

.selected {
    background: #d9d9d9;
}

.hover {
    background: #e5f3ff;
}

.files input:checked {
    display: grid;
    place-items: center;
}

.files input:checked::before {
    content: "";
    width: 9px;
    height: 4px;
    margin-bottom: 2px;
    border: solid #333;
    border-width: 0 0 1px 1px;
    transform: rotate(-45deg);
}

/* Status bar */
.status {
    height: 23px;
    display: flex;
    align-items: center;
    padding-left: 14px;
    color: #26446c;
}

.status span {
    padding-right: 10px;
    margin-right: 10px;
    border-right: 1px solid #eee;
}

.views {
    margin-left: auto;
    display: flex;
    align-items: center;
    padding-right: 4px;
}

.views button {
    width: 22px;
    height: 22px;
    display: flex;
    align-items: center;
    justify-content: center;
}

.views .on {
    background: #cce8f4;
    border: 1px solid #3d9cc4;
}

/* Properties dialog */
.dialog {
    position: absolute;
    left: 286px;
    top: 229px;
    width: 363px;
    border: 1px solid #6e6e6e;
    background: #f0f0f0;
    box-shadow: 2px 4px 14px rgba(0, 0, 0, .35);
    font-family: Roboto, "Liberation Sans", sans-serif;
}

.dialog-title {
    height: 30px;
    display: flex;
    align-items: center;
    gap: 9px;
    padding: 0 10px;
    background: #fff;
    font-family: "Open Sans", "Noto Sans", sans-serif;
}

.dialog-title button {
    margin-left: auto;
    display: flex;
}

.dialog-tabs {
    display: flex;
    align-items: flex-end;
    padding: 6px 6px 0;
}

.dialog-tabs button {
    height: 19px;
    padding: 0 5px;
    border: 1px solid #dcdcdc;
    border-left: 0;
    border-bottom: 0;
}

.dialog-tabs .active {
    height: 22px;
    padding: 0 7px 3px;
    margin-bottom: -1px;
    border-left: 1px solid #dcdcdc;
    background: #fff;
    position: relative;
}

.panel {
    height: 385px;
    margin: 0 8px 0 6px;
    padding: 15px 14px 0;
    border: 1px solid #dcdcdc;
    background: #fff;
}

.panel hr {
    margin: 0;
    border: 0;
    height: 1px;
    background: #a0a0a0;
}

.name-row {
    display: flex;
    align-items: center;
    justify-content: space-between;
    padding: 0 0 10px 4px;
    margin-right: -2px;
}

.name-row input {
    width: 247px;
    height: 24px;
    border: 1px solid #7a7a7a;
    padding: 0 3px 2px;
    outline: none;
}

.panel dl {
    display: grid;
    grid-template-columns: 73px 1fr;
    margin: 0;
    padding: 6px 0;
    line-height: 26px;
}

.panel dd {
    margin: 0;
}

.attributes {
    display: flex;
    padding-top: 12px;
}

.attributes > span {
    width: 73px;
}

.boxes {
    flex: 1;
}

.boxes label {
    display: flex;
    align-items: center;
    gap: 3px;
}

.hidden-row {
    display: flex;
    justify-content: space-between;
    align-items: center;
    padding-top: 4px;
}

.boxes .mixed {
    background: #333;
    box-shadow: inset 0 0 0 2px #fff;
}

.btn {
    width: 73px;
    height: 21px;
    border: 1px solid #adadad;
    background: #e1e1e1;
}

.btn.default {
    border: 2px solid #0078d7;
}

.btn.advanced {
    width: 103px;
}

.btn:disabled {
    background: #ccc;
    border-color: #bfbfbf;
    color: #8a8a8a;
}

.dialog-buttons {
    display: flex;
    justify-content: flex-end;
    gap: 8px;
    padding: 8px 7px;
}

/* Taskbar */
.taskbar {
    height: 40px;
    display: flex;
    color: #fff;
    background: linear-gradient(90deg, #2b1f18 0, #2b1f18 48px, #2c3b45 392px, #232f3b 590px, #3a2f35 750px, #3b383c 890px, #4a382c 960px, #3a3230 1060px, #302e30 1180px, #2b2321 1290px, #2b1c14 100%);
}

.taskbar button {
    position: relative;
    display: flex;
    align-items: center;
    justify-content: center;
}

.start {
    width: 48px;
}

.task-search {
    width: 344px;
    background: #f0f0f0;
    border: 1px solid #ccc;
    border-width: 1px 1px 0;
    display: flex;
    align-items: center;
    gap: 12px;
    padding-left: 11px;
    color: #222;
}

.task-search input {
    border: 0;
    padding: 0;
    background: none;
    outline: none;
    font-size: 14px;
}

.task-search ::placeholder {
    color: #555;
}

.system {
    display: flex;
    padding-right: 2px;
}

.system button {
    width: 48px;
}

.apps {
    display: flex;
}

.apps button {
    width: 45px;
}

.running::after {
    content: "";
    position: absolute;
    left: 4px;
    right: 5px;
    bottom: 0;
    height: 2px;
    background: #76b9ed;
}

.apps .focused {
    background: linear-gradient(90deg, #6b5c62 0, #6b5c62 40px, #463d43 40px, #5a4f58 41px);
    padding-right: 4px;
}

.focused::after {
    left: 0;
    right: 3px;
}

.lr {
    font-size: 11px;
    fill: #b9dcec;
}

.tray {
    margin-left: auto;
    display: flex;
    align-items: center;
    gap: 16px;
    padding: 0 8px;
}

.tray svg {
    width: 16px;
    height: 16px;
}

.clock {
    width: 60px;
    padding: 2px 0 0 4px;
    text-align: center;
    line-height: 18px;
}

.action {
    width: 48px;
}

.show-desktop {
    width: 5px;
    margin-left: 4px;
    border-left: 1px solid #877c76;
}
```
